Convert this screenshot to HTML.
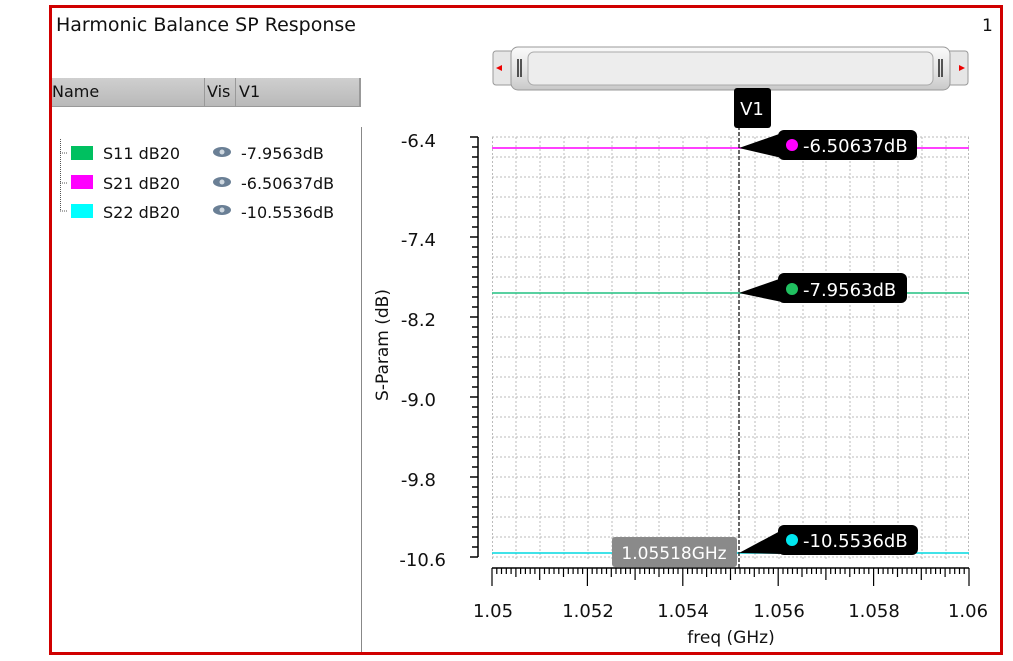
<!DOCTYPE html>
<html><head><meta charset="utf-8"><style>
body{margin:0;width:1013px;height:661px;background:#fff;position:relative;overflow:hidden;font-family:"DejaVu Sans","Liberation Sans",sans-serif;}
.frame{position:absolute;left:49px;top:5px;width:948px;height:644px;border:3px solid #d00000;background:#fff;}
.t{position:absolute;white-space:nowrap;color:#111;}
</style></head><body>
<div class="frame"></div>
<div class="t" style="left:56px;top:14px;font-size:19px;">Harmonic Balance SP Response</div>
<div class="t" style="left:982px;top:16px;font-size:17px;">1</div>
<div style="position:absolute;left:52px;top:78px;width:309px;height:28px;background:linear-gradient(#cfcfcf,#b9b9b9);border-bottom:1px solid #999;"></div>
<div style="position:absolute;left:204px;top:78px;width:1px;height:28px;background:#999"></div>
<div style="position:absolute;left:235px;top:78px;width:1px;height:28px;background:#999"></div>
<div style="position:absolute;left:359px;top:78px;width:2px;height:28px;background:#999"></div>
<div class="t" style="left:52px;top:82px;font-size:16px;">Name</div>
<div class="t" style="left:207px;top:82px;font-size:16px;">Vis</div>
<div class="t" style="left:239px;top:82px;font-size:16px;">V1</div>
<div style="position:absolute;left:361px;top:127px;width:1px;height:525px;background:#888"></div>
<svg style="position:absolute;left:0;top:0" width="1013" height="661">
<g stroke="#555" stroke-dasharray="1,1" fill="none"><path d="M60.5 139V211M60 153H68M60 183H68M60 211H68"/></g>
<rect x="71" y="146" width="22" height="14" fill="#00c060"/>
<rect x="71" y="175" width="22" height="14" fill="#ff00ff"/>
<rect x="71" y="204" width="22" height="14" fill="#00ffff"/>
<g fill="#6a7f95"><ellipse cx="222" cy="152" rx="9" ry="5"/><ellipse cx="222" cy="182" rx="9" ry="5"/><ellipse cx="222" cy="210" rx="9" ry="5"/></g>
<g fill="#cfd8e0"><circle cx="222" cy="152" r="2.5"/><circle cx="222" cy="182" r="2.5"/><circle cx="222" cy="210" r="2.5"/></g>
<g font-size="16" fill="#111" font-family="DejaVu Sans,Liberation Sans,sans-serif">
<text x="103" y="159">S11 dB20</text><text x="103" y="189">S21 dB20</text><text x="103" y="218">S22 dB20</text>
<text x="241" y="159">-7.9563dB</text><text x="241" y="189">-6.50637dB</text><text x="241" y="218">-10.5536dB</text>
</g>
<rect x="493" y="51" width="22" height="34" rx="3" fill="#e6e6e6" stroke="#999"/>
<rect x="946" y="51" width="22" height="34" rx="3" fill="#e6e6e6" stroke="#999"/>
<path d="M496 68l6-3v6z" fill="#e00"/><path d="M965 68l-6-3v6z" fill="#e00"/>
<defs><linearGradient id="sg" x1="0" y1="0" x2="0" y2="1"><stop offset="0" stop-color="#fafafa"/><stop offset=".6" stop-color="#e2e2e2"/><stop offset="1" stop-color="#c8c8c8"/></linearGradient></defs>
<rect x="511" y="47" width="439" height="43" rx="7" fill="url(#sg)" stroke="#999"/>
<rect x="528" y="52" width="405" height="33" rx="6" fill="#ededed" stroke="#aaa"/>
<path d="M518 59v18M521 59v18M939 59v18M942 59v18" stroke="#222" stroke-width="1.5"/>
<g stroke="#bbb" stroke-dasharray="2,2">
<path d="M492 137H969M492 157H969M492 177H969M492 197H969M492 217H969M492 237H969M492 257H969M492 277H969M492 297H969M492 317H969M492 337H969M492 357H969M492 377H969M492 397H969M492 417H969M492 437H969M492 457H969M492 477H969M492 497H969M492 517H969M492 537H969M492 557H969"/>
<path d="M492.5 137V560M516 137V560M540 137V560M564 137V560M588 137V560M612 137V560M636 137V560M659 137V560M683 137V560M707 137V560M731 137V560M755 137V560M779 137V560M803 137V560M826 137V560M850 137V560M874 137V560M898 137V560M922 137V560M946 137V560M968.5 137V560"/>
</g>
<path d="M478 137V557" stroke="#000" stroke-width="1.5"/>
<g stroke="#000" stroke-width="1.5">
<path d="M470 137h8M472 147h6M472 157h6M472 167h6M472 177h6M472 187h6M472 197h6M472 207h6M472 217h6M472 227h6M470 237h8M472 247h6M472 257h6M472 267h6M472 277h6M472 287h6M472 297h6M472 307h6M470 317h8M472 327h6M472 337h6M472 347h6M472 357h6M472 367h6M472 377h6M472 387h6M470 397h8M472 407h6M472 417h6M472 427h6M472 437h6M472 447h6M472 457h6M472 467h6M470 477h8M472 487h6M472 497h6M472 507h6M472 517h6M472 527h6M472 537h6M472 547h6M470 557h8"/>
</g>
<path d="M492 568H969" stroke="#000" stroke-width="1.5"/>
<path id="xticks" stroke="#000" stroke-width="1.2" d=""/>
<path d="M492 148H969" stroke="#ff00ff" stroke-width="1.5"/>
<path d="M492 293H969" stroke="#20c080" stroke-width="1.5"/>
<path d="M492 553H969" stroke="#00d8e0" stroke-width="1.5"/>
<path d="M739 120V568" stroke="#000" stroke-width="1.2" stroke-dasharray="4,2"/>
<rect x="734" y="88" width="37" height="40" rx="3" fill="#000"/>
<text x="752" y="115" fill="#fff" font-size="18" text-anchor="middle" font-family="DejaVu Sans,sans-serif">V1</text>
<path d="M739 148L782 133V158Z" fill="#000"/>
<rect x="778" y="130" width="139" height="30" rx="6" fill="#000"/>
<circle cx="792" cy="145" r="6" fill="#ff00ff"/>
<text x="803" y="152" fill="#fff" font-size="18" font-family="DejaVu Sans,sans-serif">-6.50637dB</text>
<path d="M739 293L782 278V302Z" fill="#000"/>
<rect x="778" y="273" width="129" height="30" rx="6" fill="#000"/>
<circle cx="792" cy="289" r="6" fill="#20c060"/>
<text x="803" y="296" fill="#fff" font-size="18" font-family="DejaVu Sans,sans-serif">-7.9563dB</text>
<path d="M739 553L782 530V554Z" fill="#000"/>
<rect x="778" y="525" width="140" height="30" rx="6" fill="#000"/>
<circle cx="792" cy="540" r="6" fill="#00e8f0"/>
<text x="803" y="547" fill="#fff" font-size="18" font-family="DejaVu Sans,sans-serif">-10.5536dB</text>
<rect x="612" y="537" width="125" height="30" rx="3" fill="#8a8a8a"/>
<text x="674" y="559" fill="#fff" font-size="17" text-anchor="middle" font-family="DejaVu Sans,sans-serif">1.05518GHz</text>
<g font-size="18" fill="#111" font-family="DejaVu Sans,Liberation Sans,sans-serif" text-anchor="end">
<text x="436" y="147">-6.4</text><text x="436" y="246">-7.4</text><text x="436" y="326">-8.2</text><text x="436" y="406">-9.0</text><text x="436" y="486">-9.8</text><text x="446" y="566">-10.6</text>
</g>
<g font-size="18" fill="#111" font-family="DejaVu Sans,Liberation Sans,sans-serif" text-anchor="middle">
<text x="493" y="617">1.05</text><text x="588" y="617">1.052</text><text x="683" y="617">1.054</text><text x="779" y="617">1.056</text><text x="874" y="617">1.058</text><text x="968" y="617">1.06</text>
<text x="731" y="643" font-size="17">freq (GHz)</text>
<text transform="translate(388 345) rotate(-90)" font-size="17">S-Param (dB)</text>
</g>
</svg>
<script>
var d="";for(var i=0;i<=100;i++){var x=492+i*4.77;var L=(i%20==0)?18:(i%10==0?12:(i%5==0?9:6));d+="M"+x.toFixed(1)+" 568v"+L;}
document.getElementById("xticks").setAttribute("d",d);
</script>
</body></html>
